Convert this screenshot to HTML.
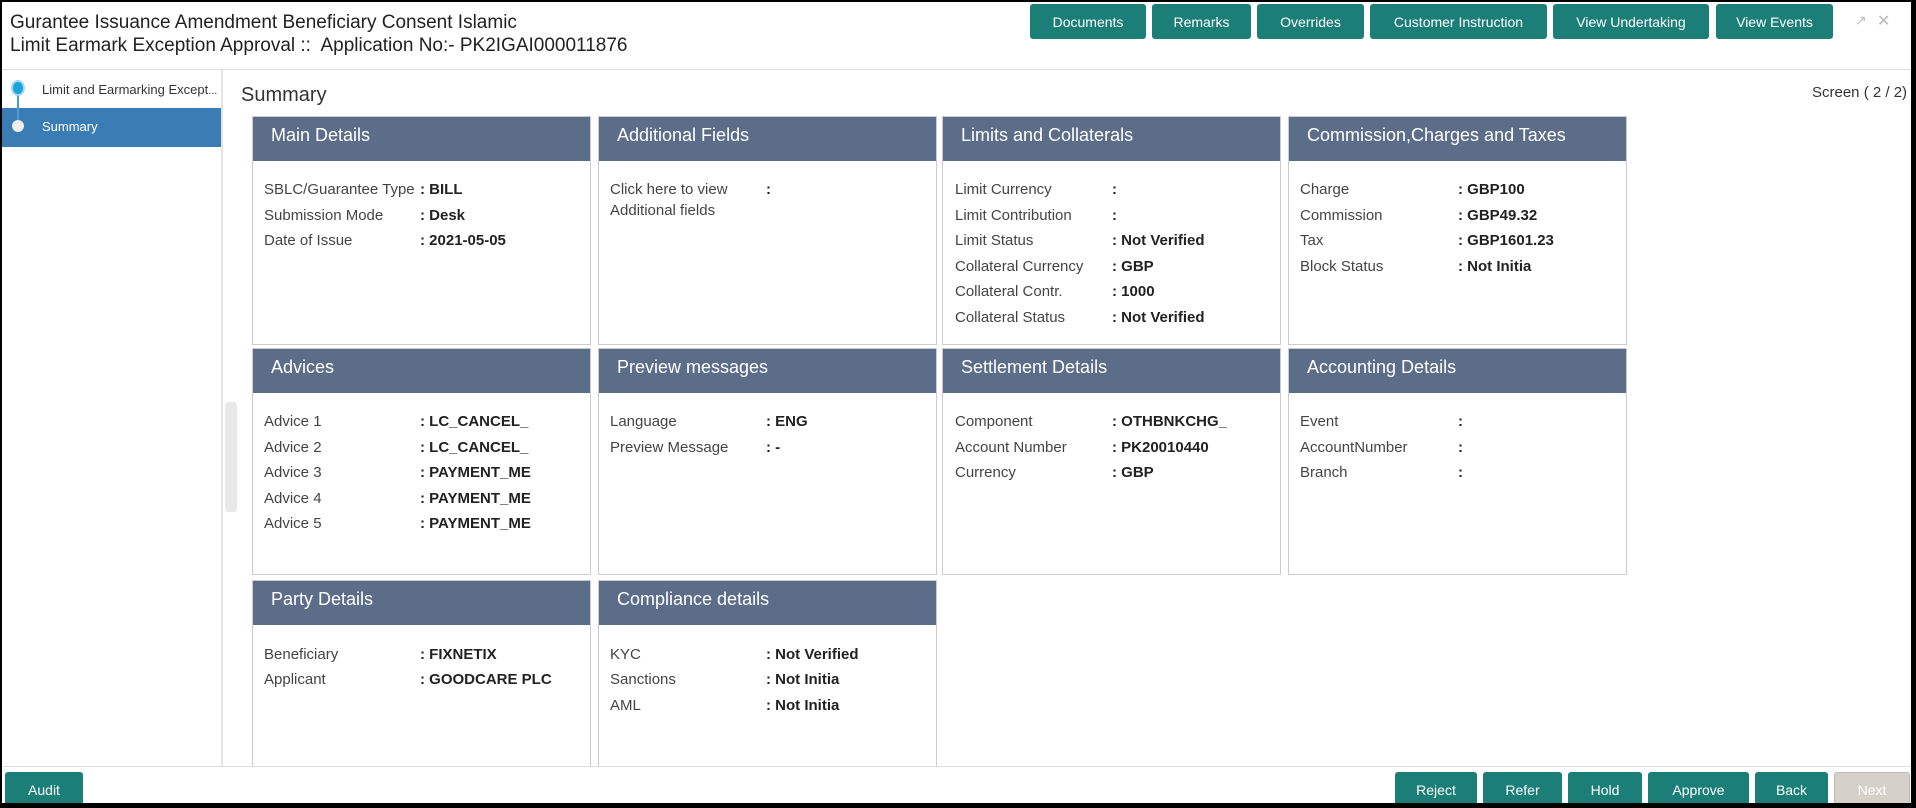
<!DOCTYPE html>
<html><head><meta charset="utf-8"><style>
*{box-sizing:border-box;margin:0;padding:0}
body{width:1916px;height:808px;overflow:hidden;background:#000;font-family:"Liberation Sans",sans-serif;color:#333;position:relative}
.frame{position:absolute;left:2px;top:2px;width:1909px;height:801px;background:#fff;overflow:hidden}
.abs{position:absolute}
.t1{left:8px;font-size:19px;color:#222;white-space:nowrap}
.btn{position:absolute;background:#1b7f78;color:#fff;font-size:14px;text-align:center;border-radius:3px;display:flex;align-items:center;justify-content:center}
.card{position:absolute;width:339px;border:1px solid #ccc;background:#fff}
.card .h{background:#5b6d89;color:#fff;height:44px;font-size:18px;padding:8px 0 0 18px}
.row{position:absolute;font-size:15px;color:#444;white-space:nowrap}
.row b{position:absolute;color:#222}
</style></head><body><div class="frame">
<div class="abs t1" style="top:10px">Gurantee Issuance Amendment Beneficiary Consent Islamic</div>
<div class="abs t1" style="top:33px">Limit Earmark Exception Approval ::&nbsp; Application No:- PK2IGAI000011876</div>
<div class="btn" style="left:1028px;top:2px;width:116px;height:35px">Documents</div>
<div class="btn" style="left:1150px;top:2px;width:99px;height:35px">Remarks</div>
<div class="btn" style="left:1255px;top:2px;width:107px;height:35px">Overrides</div>
<div class="btn" style="left:1368px;top:2px;width:177px;height:35px">Customer Instruction</div>
<div class="btn" style="left:1551px;top:2px;width:156px;height:35px">View Undertaking</div>
<div class="btn" style="left:1714px;top:2px;width:117px;height:35px">View Events</div>
<div class="abs" style="left:1853px;top:10px;color:#bbb;font-size:14px">&#8599;</div>
<div class="abs" style="left:1875px;top:9px;color:#bbb;font-size:16px">✕</div>
<div class="abs" style="left:0;top:67px;width:1909px;height:1px;background:#ddd"></div>
<div class="abs" style="left:219px;top:68px;width:2px;height:720px;background:#e4e4e4"></div>
<div class="abs" style="left:0;top:106px;width:219px;height:39px;background:#3a7db4"></div>
<div class="abs" style="left:15px;top:84px;width:2px;height:42px;background:#4a9bd6"></div>
<div class="abs" style="left:9px;top:78px;width:14px;height:16px;border-radius:50%;background:#1aa3d8;border:2px solid #9fd6ef"></div>
<div class="abs" style="left:10px;top:118px;width:12px;height:12px;border-radius:50%;background:#eee"></div>
<div class="abs" style="left:40px;top:80px;font-size:13px;color:#333">Limit and Earmarking Except<span style="font-size:11px">...</span></div>
<div class="abs" style="left:40px;top:117px;font-size:13px;color:#fff">Summary</div>
<div class="abs" style="left:223px;top:400px;width:12px;height:110px;background:#e8e8e8;border-radius:3px"></div>
<div class="abs" style="left:239px;top:82px;font-size:20px;color:#333">Summary</div>
<div class="abs" style="left:1810px;top:82px;font-size:15px;color:#333">Screen ( 2 / 2)</div>

<div class="card" style="left:250px;top:114px;height:229px"><div class="h">Main Details</div></div>
<div class="card" style="left:596px;top:114px;height:229px"><div class="h">Additional Fields</div></div>
<div class="card" style="left:940px;top:114px;height:229px"><div class="h">Limits and Collaterals</div></div>
<div class="card" style="left:1286px;top:114px;height:229px"><div class="h">Commission,Charges and Taxes</div></div>
<div class="card" style="left:250px;top:346px;height:227px"><div class="h">Advices</div></div>
<div class="card" style="left:596px;top:346px;height:227px"><div class="h">Preview messages</div></div>
<div class="card" style="left:940px;top:346px;height:227px"><div class="h">Settlement Details</div></div>
<div class="card" style="left:1286px;top:346px;height:227px"><div class="h">Accounting Details</div></div>
<div class="card" style="left:250px;top:578px;height:240px"><div class="h">Party Details</div></div>
<div class="card" style="left:596px;top:578px;height:240px"><div class="h">Compliance details</div></div>

<!-- rows -->
<div class="row" style="left:262px;top:179px">SBLC/Guarantee Type<b style="left:156px">: BILL</b></div>
<div class="row" style="left:262px;top:205px">Submission Mode<b style="left:156px">: Desk</b></div>
<div class="row" style="left:262px;top:230px">Date of Issue<b style="left:156px">: 2021-05-05</b></div>

<div class="row" style="left:608px;top:179px">Click here to view<b style="left:156px">:</b></div>
<div class="row" style="left:608px;top:200px">Additional fields</div>

<div class="row" style="left:953px;top:179px">Limit Currency<b style="left:157px">:</b></div>
<div class="row" style="left:953px;top:205px">Limit Contribution<b style="left:157px">:</b></div>
<div class="row" style="left:953px;top:230px">Limit Status<b style="left:157px">: Not Verified</b></div>
<div class="row" style="left:953px;top:256px">Collateral Currency<b style="left:157px">: GBP</b></div>
<div class="row" style="left:953px;top:281px">Collateral Contr.<b style="left:157px">: 1000</b></div>
<div class="row" style="left:953px;top:307px">Collateral Status<b style="left:157px">: Not Verified</b></div>

<div class="row" style="left:1298px;top:179px">Charge<b style="left:158px">: GBP100</b></div>
<div class="row" style="left:1298px;top:205px">Commission<b style="left:158px">: GBP49.32</b></div>
<div class="row" style="left:1298px;top:230px">Tax<b style="left:158px">: GBP1601.23</b></div>
<div class="row" style="left:1298px;top:256px">Block Status<b style="left:158px">: Not Initia</b></div>

<div class="row" style="left:262px;top:411px">Advice 1<b style="left:156px">: LC_CANCEL_</b></div>
<div class="row" style="left:262px;top:437px">Advice 2<b style="left:156px">: LC_CANCEL_</b></div>
<div class="row" style="left:262px;top:462px">Advice 3<b style="left:156px">: PAYMENT_ME</b></div>
<div class="row" style="left:262px;top:488px">Advice 4<b style="left:156px">: PAYMENT_ME</b></div>
<div class="row" style="left:262px;top:513px">Advice 5<b style="left:156px">: PAYMENT_ME</b></div>

<div class="row" style="left:608px;top:411px">Language<b style="left:156px">: ENG</b></div>
<div class="row" style="left:608px;top:437px">Preview Message<b style="left:156px">: -</b></div>

<div class="row" style="left:953px;top:411px">Component<b style="left:157px">: OTHBNKCHG_</b></div>
<div class="row" style="left:953px;top:437px">Account Number<b style="left:157px">: PK20010440</b></div>
<div class="row" style="left:953px;top:462px">Currency<b style="left:157px">: GBP</b></div>

<div class="row" style="left:1298px;top:411px">Event<b style="left:158px">:</b></div>
<div class="row" style="left:1298px;top:437px">AccountNumber<b style="left:158px">:</b></div>
<div class="row" style="left:1298px;top:462px">Branch<b style="left:158px">:</b></div>

<div class="row" style="left:262px;top:644px">Beneficiary<b style="left:156px">: FIXNETIX</b></div>
<div class="row" style="left:262px;top:669px">Applicant<b style="left:156px">: GOODCARE PLC</b></div>

<div class="row" style="left:608px;top:644px">KYC<b style="left:156px">: Not Verified</b></div>
<div class="row" style="left:608px;top:669px">Sanctions<b style="left:156px">: Not Initia</b></div>
<div class="row" style="left:608px;top:695px">AML<b style="left:156px">: Not Initia</b></div>

<div class="abs" style="left:0;top:764px;width:1909px;height:44px;background:#fff;border-top:1px solid #ddd"></div>
<div class="btn" style="left:3px;top:770px;width:78px;height:36px">Audit</div>
<div class="btn" style="left:1393px;top:770px;width:82px;height:36px">Reject</div>
<div class="btn" style="left:1481px;top:770px;width:79px;height:36px">Refer</div>
<div class="btn" style="left:1566px;top:770px;width:74px;height:36px">Hold</div>
<div class="btn" style="left:1646px;top:770px;width:101px;height:36px">Approve</div>
<div class="btn" style="left:1753px;top:770px;width:73px;height:36px">Back</div>
<div class="btn" style="left:1832px;top:770px;width:76px;height:36px;background:#d6d1c8;border:1px solid #bbb">Next</div>
</div></body></html>
